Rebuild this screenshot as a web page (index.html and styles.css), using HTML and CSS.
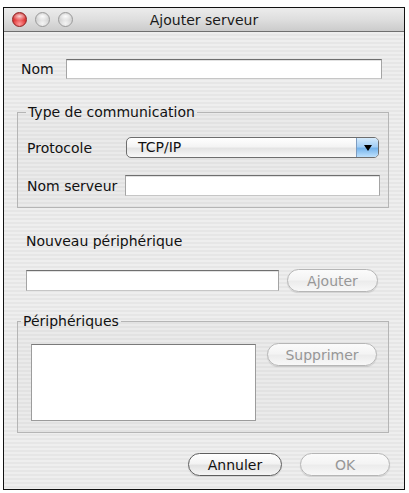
FILE: index.html
```html
<!DOCTYPE html>
<html lang="fr">
<head>
<meta charset="utf-8">
<title>Ajouter serveur</title>
<link rel="stylesheet" href="styles.css">
</head>
<body>
<div class="window">
  <div class="titlebar">
    <div class="lights">
      <span class="light light-red"></span>
      <span class="light"></span>
      <span class="light"></span>
    </div>
    <div class="title">Ajouter serveur</div>
    <div class="spacer"></div>
  </div>
  <div class="content">
    <div class="row row-nom">
      <label class="lbl lbl-nom">Nom</label>
      <input class="field field-nom" type="text">
    </div>

    <fieldset class="group group-comm">
      <legend class="legend legend-comm">Type de communication</legend>
      <div class="group-body comm-body">
        <div class="row">
          <label class="lbl lbl-wide">Protocole</label>
          <div class="popup">
            <span class="popup-text">TCP/IP</span>
            <span class="popup-arrow"><span class="tri"></span></span>
          </div>
        </div>
        <div class="row row-server">
          <label class="lbl lbl-wide">Nom serveur</label>
          <input class="field field-server" type="text">
        </div>
      </div>
    </fieldset>

    <div class="section-label">Nouveau périphérique</div>
    <div class="row add-row">
      <input class="field field-new" type="text">
      <button class="btn btn-disabled btn-add">Ajouter</button>
    </div>

    <fieldset class="group group-dev">
      <legend class="legend legend-dev">Périphériques</legend>
      <div class="group-body dev-body">
        <div class="listbox"></div>
        <button class="btn btn-disabled btn-del">Supprimer</button>
      </div>
    </fieldset>

    <div class="footer">
      <button class="btn btn-cancel">Annuler</button>
      <button class="btn btn-disabled btn-ok">OK</button>
    </div>
  </div>
</div>
</body>
</html>
```

FILE: styles.css
```css
* { box-sizing: border-box; }

html, body {
  margin: 0;
  padding: 0;
  background: #ffffff;
}

body {
  font-family: "DejaVu Sans", "Liberation Sans", sans-serif;
  font-size: 14px;
  color: #111;
}

.window {
  margin: 7px 0 0 3px;
  width: 402px;
  height: 483px;
  border: 1px solid #111;
  display: flex;
  flex-direction: column;
  background: repeating-linear-gradient(to bottom, #eeeeee 0 2px, #e6e6e6 2px 4px);
}

.titlebar {
  height: 24px;
  display: grid;
  grid-template-columns: 1fr auto 1fr;
  align-items: center;
  background: linear-gradient(to bottom, #ececec 0%, #dedede 50%, #cbcbcb 100%);
  border-bottom: 1px solid #6f6f6f;
  flex: none;
}

.lights {
  display: flex;
  gap: 8px;
  padding-left: 8px;
}

.light {
  width: 15px;
  height: 15px;
  border-radius: 50%;
  border: 1px solid #9a9a9a;
  background:
    radial-gradient(ellipse 60% 35% at 50% 25%, rgba(255,255,255,0.95), rgba(255,255,255,0) 100%),
    radial-gradient(circle at 50% 80%, #f4f4f4 0%, #d4d4d4 55%, #bdbdbd 100%);
}

.light-red {
  border-color: #8e2020;
  background:
    radial-gradient(ellipse 60% 35% at 50% 25%, rgba(255,220,220,0.95), rgba(255,255,255,0) 100%),
    radial-gradient(circle at 50% 85%, #ff9a9a 0%, #e03a3a 50%, #b81818 100%);
}

.title {
  font-size: 14px;
  color: #1a1a1a;
  line-height: 16px;
}

.content {
  flex: 1;
  display: flex;
  flex-direction: column;
  padding: 27px 15px 0 13px;
}

.row {
  display: flex;
  align-items: center;
}

.lbl {
  line-height: 16px;
  flex: none;
}

.lbl-nom {
  width: 45px;
  margin-left: 4px;
}

.lbl-wide {
  width: 98px;
}

.field {
  height: 20px;
  border: 1px solid #a4a4a4;
  border-top-color: #6f6f6f;
  border-bottom-color: #c6c6c6;
  background: #fff;
  box-shadow: inset 0 1px 0 #e2e2e2;
  padding: 0 3px;
  font: inherit;
  outline: none;
  margin: 0;
}

.field-nom {
  flex: 1;
  margin-right: 7px;
}

.group {
  margin: 0;
  padding: 0;
  min-width: 0;
  border: 1px solid #b5b5b5;
  background: rgba(0, 0, 0, 0.015);
}

.legend {
  line-height: 16px;
  padding: 0 2px;
}

.group-comm { margin-top: 25px; }
.legend-comm { margin-left: 8px; }

.comm-body {
  padding: 17px 9px 11px 9px;
}

.popup {
  flex: 1;
  height: 21px;
  margin-left: 1px;
  display: flex;
  border: 1px solid #6e6e6e;
  border-radius: 5px;
  overflow: hidden;
  background: linear-gradient(to bottom, #ffffff 0%, #f4f4f4 45%, #e4e4e4 55%, #f8f8f8 100%);
}

.popup-text {
  flex: 1;
  padding-left: 11px;
  line-height: 19px;
}

.popup-arrow {
  width: 22px;
  border-left: 1px solid #7d9cc0;
  display: flex;
  align-items: center;
  justify-content: center;
  background: linear-gradient(to bottom, #d6ebfc 0%, #a4cff6 45%, #76b4ec 55%, #bfe1fc 100%);
}

.tri {
  width: 0;
  height: 0;
  border-left: 4px solid transparent;
  border-right: 4px solid transparent;
  border-top: 6px solid #000;
  margin-top: 1px;
}

.row-server { margin-top: 17px; }

.field-server {
  flex: 1;
  height: 21px;
  margin-right: -1px;
}

.section-label {
  margin-top: 25px;
  margin-left: 9px;
  line-height: 16px;
}

.add-row { margin-top: 20px; }

.field-new {
  width: 253px;
  height: 21px;
  margin-left: 9px;
}

.btn {
  height: 23px;
  border: 1px solid #7f7f7f;
  border-radius: 12px;
  background: linear-gradient(to bottom, #ffffff 0%, #f3f3f3 45%, #e2e2e2 55%, #f6f6f6 100%);
  box-shadow: 0 1px 1px rgba(0, 0, 0, 0.12);
  font: inherit;
  color: #111;
  padding: 0;
  line-height: 20px;
  text-align: center;
}

.btn-disabled {
  border-color: #b6b6b6;
  color: #979797;
  background: linear-gradient(to bottom, #fbfbfb 0%, #f4f4f4 45%, #ececec 55%, #f8f8f8 100%);
}

.btn-add {
  width: 91px;
  margin-left: 8px;
}

.group-dev { margin-top: 21px; }
.legend-dev { margin-left: 3px; }

.dev-body {
  display: flex;
  align-items: flex-start;
  padding: 15px 9px 11px 13px;
}

.listbox {
  width: 225px;
  height: 77px;
  background: #fff;
  border: 1px solid #9c9c9c;
  border-top-color: #7a7a7a;
}

.btn-del {
  width: 110px;
  margin-left: 11px;
  margin-top: -1px;
}

.footer {
  margin-top: 20px;
  margin-right: -1px;
  display: flex;
  justify-content: flex-end;
  gap: 18px;
}

.btn-cancel {
  width: 94px;
  border-color: #5e5e5e;
}

.btn-ok {
  width: 90px;
}
```
